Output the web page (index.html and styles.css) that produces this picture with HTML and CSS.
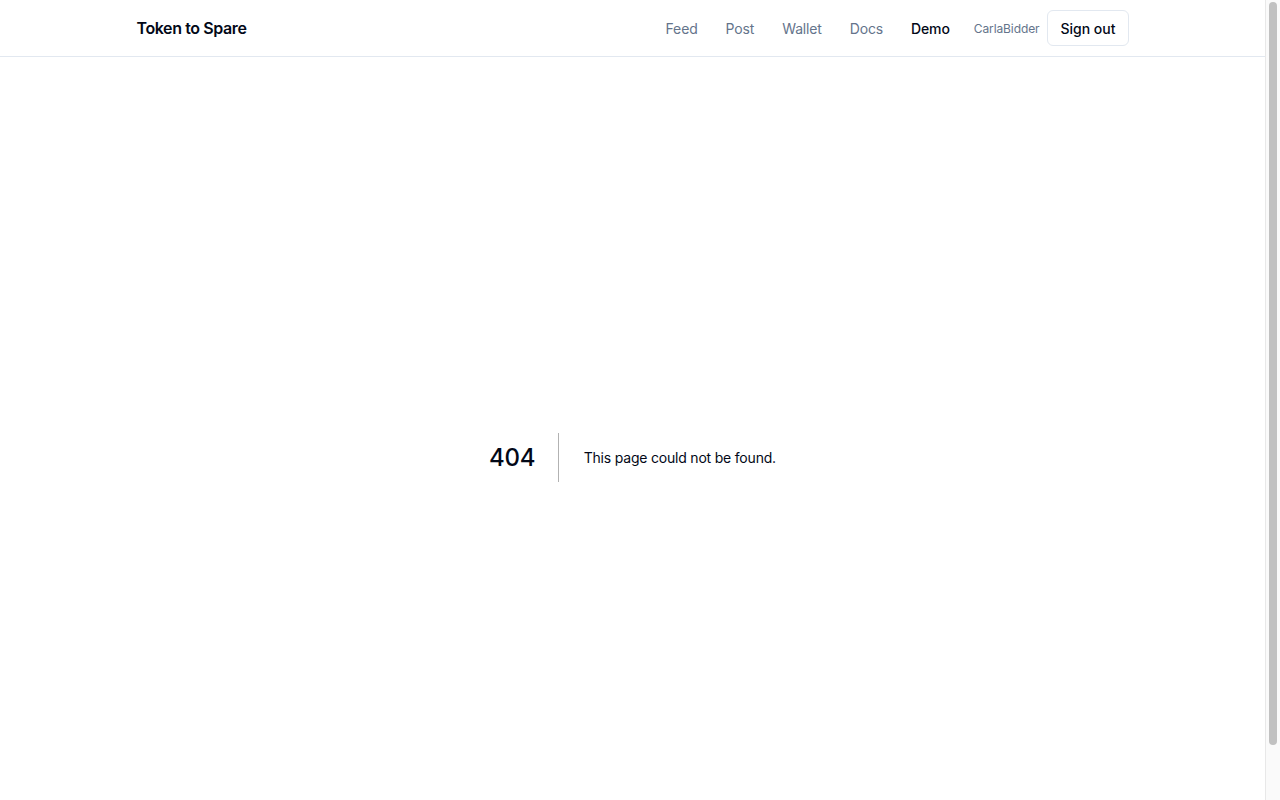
FILE: index.html
```html
<!DOCTYPE html>
<html lang="en">
<head>
  <meta charset="UTF-8" />
  <title>404: This page could not be found. | Token to Spare</title>
  <link rel="stylesheet" href="styles.css">
</head>
<body>
  <header class="site-header">
    <div class="container header-inner">
      <a href="#" class="brand">Token to Spare</a>
      <div class="header-right">
        <nav class="main-nav">
          <a href="#" class="nav-link">Feed</a>
          <a href="#" class="nav-link">Post</a>
          <a href="#" class="nav-link">Wallet</a>
          <a href="#" class="nav-link">Docs</a>
          <a href="#" class="nav-link active">Demo</a>
        </nav>
        <div class="user-box">
          <span class="username">CarlaBidder</span>
          <button class="btn-outline">Sign out</button>
        </div>
      </div>
    </div>
  </header>

  <main class="not-found">
    <div>
      <h1 class="nf-code">404</h1>
      <div class="nf-msg-wrap">
        <h2 class="nf-msg">This page could not be found.</h2>
      </div>
    </div>
  </main>

  <div class="fake-scrollbar"><div class="fake-thumb"></div></div>
</body>
</html>
```

FILE: styles.css
```css
* { box-sizing: border-box; }

body {
  margin: 0 15px 0 0;
  font-family: Inter, "Noto Sans", sans-serif;
  color: #020817;
  background: #fff;
}

a {
  color: inherit;
  text-decoration: none;
}

/* stand-in for the browser scrollbar */
.fake-scrollbar {
  position: fixed;
  top: 0;
  right: 0;
  bottom: 0;
  width: 15px;
  background: #fafafa;
  border-left: 1px solid #e8e8e8;
  padding: 2px 3px 0 3px;
}

.fake-thumb {
  height: 743px;
  background: #c1c1c1;
  border-radius: 4px;
}

.container {
  max-width: 1024px;
  margin: 0 auto;
  padding: 0 16px;
}

.site-header {
  border-bottom: 1px solid #e2e8f0;
  background: #fff;
}

.header-inner {
  height: 56px;
  display: flex;
  align-items: center;
  justify-content: space-between;
}

.brand {
  font-size: 16px;
  font-weight: 600;
  letter-spacing: -0.4px;
}

.header-right {
  display: flex;
  align-items: center;
}

.main-nav {
  display: flex;
  align-items: center;
  gap: 4px;
}

.nav-link {
  font-size: 14px;
  padding: 8px 12px;
  color: #64748b;
  letter-spacing: -0.15px;
}

.nav-link.active {
  color: #020817;
  font-weight: 500;
}

.user-box {
  display: flex;
  align-items: center;
  gap: 8px;
  margin-left: 12px;
}

.username {
  font-size: 12px;
  color: #64748b;
  letter-spacing: -0.1px;
}

.btn-outline {
  height: 36px;
  padding: 0 12px;
  font-family: inherit;
  font-size: 14px;
  font-weight: 500;
  color: #020817;
  background: #fff;
  border: 1px solid #e2e8f0;
  border-radius: 6px;
  cursor: pointer;
}

.not-found {
  height: 100vh;
  display: flex;
  flex-direction: column;
  align-items: center;
  justify-content: center;
  text-align: center;
}

.nf-code {
  display: inline-block;
  margin: 0 20px 0 0;
  padding: 0 23px 0 0;
  font-size: 24px;
  font-weight: 500;
  vertical-align: top;
  line-height: 49px;
  letter-spacing: -0.3px;
  border-right: 1px solid rgba(0, 0, 0, 0.3);
}

.nf-msg-wrap {
  display: inline-block;
}

.nf-msg {
  margin: 0;
  font-size: 14px;
  font-weight: 400;
  line-height: 49px;
  letter-spacing: -0.2px;
}
```
